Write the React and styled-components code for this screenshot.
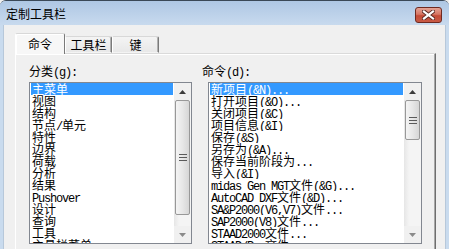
import styled, { createGlobalStyle } from 'styled-components'

const GlobalStyle = createGlobalStyle`
html, body {
  margin: 0;
  padding: 0;
  overflow: hidden;
  background: #f0f0f0;
}
`

const cjkFont = `"Noto Sans CJK SC", "Noto Sans", sans-serif`

const categories = [
  '主菜单', '视图', '结构', '节点/单元', '特性', '边界', '荷载', '分析',
  '结果', 'Pushover', '设计', '查询', '工具', '主具栏菜单',
]

const commands = [
  '新项目(&N)...', '打开项目(&O)...', '关闭项目(&C)', '项目信息(&I)',
  '保存(&S)', '另存为(&A)...', '保存当前阶段为...', '导入(&I)',
  'midas Gen MGT文件(&G)...', 'AutoCAD DXF文件(&D)...', 'SA&P2000(V6,V7)文件...',
  'SAP2000(V8)文件...', 'STAAD2000文件...', 'STAAD/Pro文件...',
]

const Window = styled.div`
width: 449px;
height: 249px;
display: flex;
flex-direction: column;
background: #c9dbee;
border-top: 1px solid #3a4857;
border-radius: 6px 6px 0 0;
box-sizing: border-box;
overflow: hidden;
font-family: ${cjkFont};
`
const TitleBar = styled.div`
height: 24px;
flex: none;
display: flex;
align-items: center;
padding: 0 7px 0 6px;
background: linear-gradient(#aec7e4, #c8daee);
`
const Title = styled.div`
font-size: 12px;
line-height: 12px;
color: #000;
margin-top: 2px;
`
const CloseButton = styled.div`
margin-left: auto;
margin-top: 3px;
width: 27px;
height: 16px;
box-sizing: border-box;
border: 1px solid #6e2920;
border-radius: 3px;
background: linear-gradient(#e4a395 0%, #d67563 45%, #c44a36 55%, #c85a45 100%);
display: flex;
align-items: center;
justify-content: center;
`
const Body = styled.div`
flex: 1;
margin: 0 3px;
background: #f0f0f0;
border-left: 1px solid #b7c8da;
border-right: 1px solid #b7c8da;
padding: 8px 0 0 11px;
display: flex;
flex-direction: column;
`
const TabRow = styled.div`
display: flex;
align-items: flex-end;
height: 20px;
position: relative;
z-index: 1;
`
const Tab = styled.div`
box-sizing: border-box;
width: ${p => p.$active ? 50 : 47}px;
height: ${p => p.$active ? 21 : 17}px;
margin-bottom: ${p => p.$active ? -1 : 0}px;
display: flex;
align-items: center;
justify-content: center;
padding-top: ${p => p.$active ? 0 : 1}px;
font-size: 12px;
line-height: 12px;
color: #000;
background: ${p => p.$active ? '#f7f7f7' : 'linear-gradient(#f4f4f4, #e8e8e8)'};
border-top: 1px solid #d8d8d8;
border-left: 1px solid #ffffff;
border-right: 1px solid #7a7a7a;
border-bottom: ${p => p.$active ? 'none' : '1px solid transparent'};
border-radius: 2px 2px 0 0;
box-shadow: ${p => p.$active ? 'inset 1px 1px #ffffff' : 'inset -1px 0 #b0b0b0'};
`
const Panel = styled.div`
width: 421px;
height: 220px;
box-sizing: border-box;
border-top: 1px solid #dadada;
border-left: 1px solid #ffffff;
border-right: 1px solid #6e6e6e;
box-shadow: inset -1px 0 #a8a8a8, inset 0 1px #ffffff;
padding: 11px 0 0 13px;
display: flex;
gap: 10px;
`
const Column = styled.div`
display: flex;
flex-direction: column;
`
const Label = styled.div`
height: 12px;
line-height: 12px;
font-size: 12px;
white-space: nowrap;
margin-bottom: 5px;
color: #000;
`
const ListBox = styled.div`
width: ${p => p.$width}px;
height: 162px;
margin-left: ${p => p.$offset || 0}px;
box-sizing: border-box;
border: 1px solid #828790;
background: #fff;
display: flex;
`
const Items = styled.div`
flex: 1;
overflow: hidden;
`
const Item = styled.div`
height: 12px;
line-height: 12px;
font-size: 12px;
margin: 0 1px;
padding-left: 1px;
white-space: nowrap;
overflow: hidden;
color: ${p => p.$selected ? '#fff' : '#000'};
background: ${p => p.$selected ? '#3399ff' : 'transparent'};
`
const Latin = styled.span`
font-family: "Liberation Mono", monospace;
font-size: 12px;
letter-spacing: -1.2px;
line-height: 12px;
`
const Scrollbar = styled.div`
width: 17px;
flex: none;
display: flex;
flex-direction: column;
background: #f0f0f0;
`
const ArrowButton = styled.div`
height: 17px;
flex: none;
display: flex;
align-items: center;
justify-content: center;
`
const Track = styled.div`
flex: 1;
background: linear-gradient(90deg, #e6e6e6, #f4f4f4 30%, #f4f4f4);
`
const Thumb = styled.div`
margin: 0 1px;
height: ${p => p.$height}px;
box-sizing: border-box;
border: 1px solid #989898;
border-radius: 2px;
background: linear-gradient(90deg, #f4f4f4, #e7e7e7 50%, #d6d6d6);
display: flex;
align-items: center;
justify-content: center;
`

const Arrow = ({ down, color }) => (
  <svg width="7" height="4" viewBox="0 0 7 4">
    <path d={down ? 'M0 0 H7 L3.5 4 Z' : 'M0 4 H7 L3.5 0 Z'} fill={color} />
  </svg>
)

const Grip = () => (
  <svg width="8" height="7" viewBox="0 0 8 7">
    <path d="M0 0.5 H8 M0 3.5 H8 M0 6.5 H8" stroke="#5a5a5a" strokeWidth="1" />
  </svg>
)

const renderText = (text) => {
  const parts = text.split(/([\u0000-\u024f]+)/).filter(Boolean)
  return parts.map((part, idx) =>
    /^[\u0000-\u024f]+$/.test(part)
      ? <Latin key={idx}>{part}</Latin>
      : <span key={idx}>{part}</span>
  )
}

const List = ({ items, width, offset, thumb }) => (
  <ListBox $width={width} $offset={offset}>
    <Items>
      {items.map((item, idx) => (
        <Item key={idx} $selected={idx === 0}>{renderText(item)}</Item>
      ))}
    </Items>
    <Scrollbar>
      <ArrowButton><Arrow color="#3c3c3c" /></ArrowButton>
      <Track>
        <Thumb $height={thumb}><Grip /></Thumb>
      </Track>
      <ArrowButton><Arrow down color="#8a8a8a" /></ArrowButton>
    </Scrollbar>
  </ListBox>
)

export default function App() {
  return (
    <>
      <GlobalStyle />
      <Window>
        <TitleBar>
          <Title>定制工具栏</Title>
          <CloseButton>
            <svg width="13" height="10" viewBox="0 0 13 10">
              <path d="M2 1.5 L11 8.5 M11 1.5 L2 8.5" stroke="#5b2a24" strokeWidth="4" strokeLinecap="square" />
              <path d="M2 1.5 L11 8.5 M11 1.5 L2 8.5" stroke="#ffffff" strokeWidth="2.2" strokeLinecap="square" />
            </svg>
          </CloseButton>
        </TitleBar>
        <Body>
          <TabRow>
            <Tab $active>命令</Tab>
            <Tab>工具栏</Tab>
            <Tab>键</Tab>
          </TabRow>
          <Panel>
            <Column>
              <Label>{renderText('分类(g):')}</Label>
              <List items={categories} width={163} thumb={115} />
            </Column>
            <Column>
              <Label>{renderText('命令(d):')}</Label>
              <List items={commands} width={214} offset={6} thumb={40} />
            </Column>
          </Panel>
        </Body>
      </Window>
    </>
  )
}
